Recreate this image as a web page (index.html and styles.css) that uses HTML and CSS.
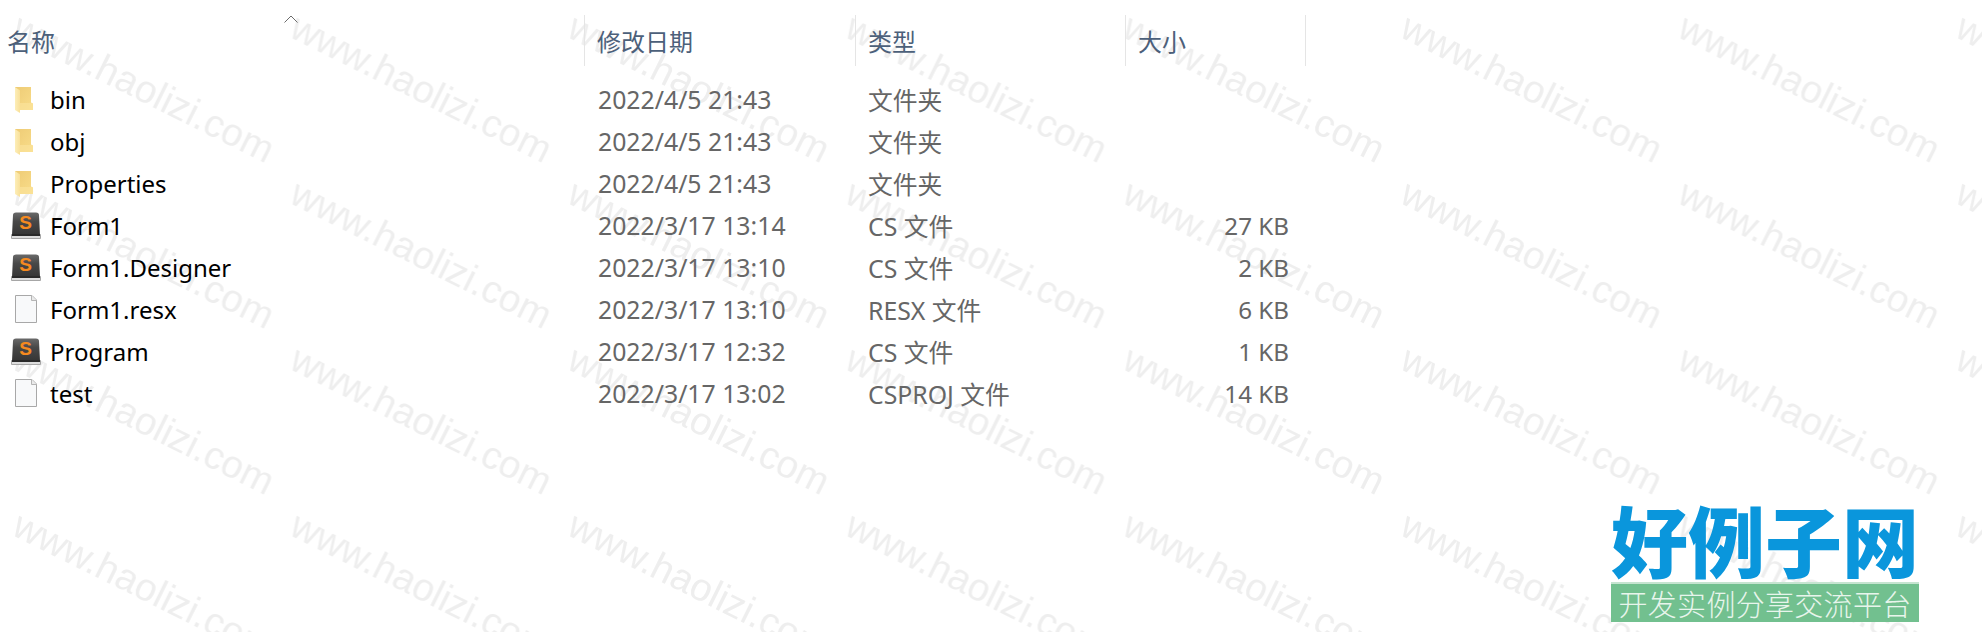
FILE: index.html
```html
<!DOCTYPE html>
<html lang="zh-CN">
<head>
<meta charset="utf-8">
<title>文件列表</title>
<link rel="stylesheet" href="styles.css">
</head>
<body>
<svg class="watermark" aria-hidden="true">
  <defs>
    <pattern id="wm" x="0" y="0" width="277.6" height="166" patternUnits="userSpaceOnUse">
      <text class="wm-text" transform="translate(10 36) rotate(26.5)">www.haolizi.com</text>
    </pattern>
  </defs>
  <rect width="100%" height="100%" fill="url(#wm)"/>
</svg>

<svg class="defs" aria-hidden="true">
  <defs>
    <linearGradient id="fback" x1="0" y1="0" x2="1" y2="1">
      <stop offset="0" stop-color="#eecb75"/><stop offset="1" stop-color="#f9dd8a"/>
    </linearGradient>
    <linearGradient id="ffront" x1="0" y1="0" x2="1" y2="0">
      <stop offset="0" stop-color="#fdeeb8"/><stop offset="1" stop-color="#f8e09a"/>
    </linearGradient>
    <linearGradient id="sbody" x1="0" y1="0" x2="0" y2="1">
      <stop offset="0" stop-color="#6a6a6a"/><stop offset=".4" stop-color="#484848"/><stop offset="1" stop-color="#353535"/>
    </linearGradient>
    <symbol id="i-folder" viewBox="0 0 32 32">
      <path fill="url(#fback)" d="M5 3H21V18.5L23 19.5V26H5Z"/>
      <path fill="url(#ffront)" d="M5 3L10 6.5V29L5 26Z"/>
      <path fill="#fbe49f" d="M10 19H23V26H10Z" opacity=".6"/>
    </symbol>
    <symbol id="i-sublime" viewBox="0 0 32 32">
      <path fill="#dcdcdc" stroke="#a6a6a6" d="M1.5 24.5H30.5V28.5H1.5Z"/>
      <path fill="url(#sbody)" d="M3 5Q3 2.5 6 2.5H26Q29 2.5 29 5L30 25H2Z"/>
      <path fill="#2a2a2a" d="M2 24H30V26H2Z"/>
      <text class="sublime-s" x="15.5" y="18.5">S</text>
    </symbol>
    <symbol id="i-file" viewBox="0 0 32 32">
      <path fill="#f8f9fa" stroke="#a8a8a8" d="M5.5 1.5H22L26.5 6V28.5H5.5Z"/>
      <path fill="#eaeaea" stroke="#b5b5b5" d="M21.5 1.5V6.5H26.5"/>
    </symbol>
  </defs>
</svg>

<main class="list">
  <svg class="sort-caret" viewBox="0 0 14 8" aria-hidden="true"><path d="M.5 7.5L7 1L13.5 7.5"/></svg>

  <div class="head">
    <div class="hcell hname">名称</div>
    <div class="hcell">修改日期</div>
    <div class="hcell htype">类型</div>
    <div class="hcell">大小</div>
  </div>

  <div class="row"><div class="name"><svg class="icon"><use href="#i-folder"/></svg><span>bin</span></div><div class="cell">2022/4/5 21:43</div><div class="cell type">文件夹</div><div class="cell size"></div></div>
  <div class="row"><div class="name"><svg class="icon"><use href="#i-folder"/></svg><span>obj</span></div><div class="cell">2022/4/5 21:43</div><div class="cell type">文件夹</div><div class="cell size"></div></div>
  <div class="row"><div class="name"><svg class="icon"><use href="#i-folder"/></svg><span>Properties</span></div><div class="cell">2022/4/5 21:43</div><div class="cell type">文件夹</div><div class="cell size"></div></div>
  <div class="row"><div class="name"><svg class="icon"><use href="#i-sublime"/></svg><span>Form1</span></div><div class="cell">2022/3/17 13:14</div><div class="cell type">CS 文件</div><div class="cell size">27 KB</div></div>
  <div class="row"><div class="name"><svg class="icon"><use href="#i-sublime"/></svg><span>Form1.Designer</span></div><div class="cell">2022/3/17 13:10</div><div class="cell type">CS 文件</div><div class="cell size">2 KB</div></div>
  <div class="row"><div class="name"><svg class="icon"><use href="#i-file"/></svg><span>Form1.resx</span></div><div class="cell">2022/3/17 13:10</div><div class="cell type">RESX 文件</div><div class="cell size">6 KB</div></div>
  <div class="row"><div class="name"><svg class="icon"><use href="#i-sublime"/></svg><span>Program</span></div><div class="cell">2022/3/17 12:32</div><div class="cell type">CS 文件</div><div class="cell size">1 KB</div></div>
  <div class="row"><div class="name"><svg class="icon"><use href="#i-file"/></svg><span>test</span></div><div class="cell">2022/3/17 13:02</div><div class="cell type">CSPROJ 文件</div><div class="cell size">14 KB</div></div>
</main>

<aside class="logo">
  <div class="logo-title">好例子网</div>
  <div class="logo-sub">开发实例分享交流平台</div>
</aside>
</body>
</html>
```

FILE: styles.css
```css
html, body {
  margin: 0;
  padding: 0;
  width: 1982px;
  height: 632px;
  overflow: hidden;
  background: #fff;
}

body {
  position: relative;
  font-family: "Noto Sans", "Noto Sans CJK SC", sans-serif;
  font-size: 24px;
}

.watermark {
  position: absolute;
  left: 0;
  top: 0;
  width: 1982px;
  height: 632px;
}

.wm-text {
  font-family: "Liberation Sans", sans-serif;
  font-size: 38.7px;
  fill: #eeeeee;
}

.defs {
  position: absolute;
  width: 0;
  height: 0;
}

.list {
  position: relative;
  padding-top: 15px;
}

.sort-caret {
  position: absolute;
  left: 284px;
  top: 15px;
  width: 14px;
  height: 8px;
  fill: none;
  stroke: #6b6b6b;
  stroke-width: 1;
}

.head,
.row {
  display: grid;
  grid-template-columns: 585px 271px 270px 180px;
}

.head {
  height: 51px;
  margin-bottom: 13px;
}

.hcell {
  display: flex;
  align-items: center;
  padding-left: 12px;
  color: #4c607a;
  border-right: 1px solid #e5e5e5;
  font-family: "Noto Sans CJK SC", sans-serif;
  font-size: 24px;
  box-sizing: border-box;
}

.hname {
  padding-left: 7px;
}

.row {
  height: 42px;
  align-items: center;
}

.name {
  display: flex;
  align-items: center;
  gap: 8px;
  padding-left: 10px;
  color: #000;
}

.name span {
  padding-bottom: 2px;
}

.icon {
  width: 32px;
  height: 32px;
  flex: none;
}

.cell {
  padding: 0 0 2px 13px;
  color: #666;
  font-size: 24.8px;
  white-space: nowrap;
}

.type {
  padding-left: 12px;
}

.size {
  padding: 0 17px 2px 0;
  font-size: 24.2px;
  text-align: right;
}

.sublime-s {
  font-family: "Liberation Sans", sans-serif;
  font-weight: 700;
  font-size: 19px;
  fill: #f58a1f;
  text-anchor: middle;
}

.logo {
  position: absolute;
  left: 1611px;
  top: 496px;
  width: 308px;
}

.logo-title {
  height: 86px;
  line-height: 86px;
  font-family: "Noto Sans CJK SC", sans-serif;
  font-weight: 900;
  font-size: 77px;
  color: #0a96dc;
  white-space: nowrap;
}

.logo-sub {
  height: 40px;
  line-height: 38px;
  background: #72c08f;
  border-top: 2px solid #c5e4d0;
  box-sizing: border-box;
  color: #e8f5ec;
  font-family: "Noto Sans CJK SC", sans-serif;
  font-size: 29px;
  letter-spacing: 0.3px;
  font-weight: 300;
  text-align: center;
  white-space: nowrap;
}
```
